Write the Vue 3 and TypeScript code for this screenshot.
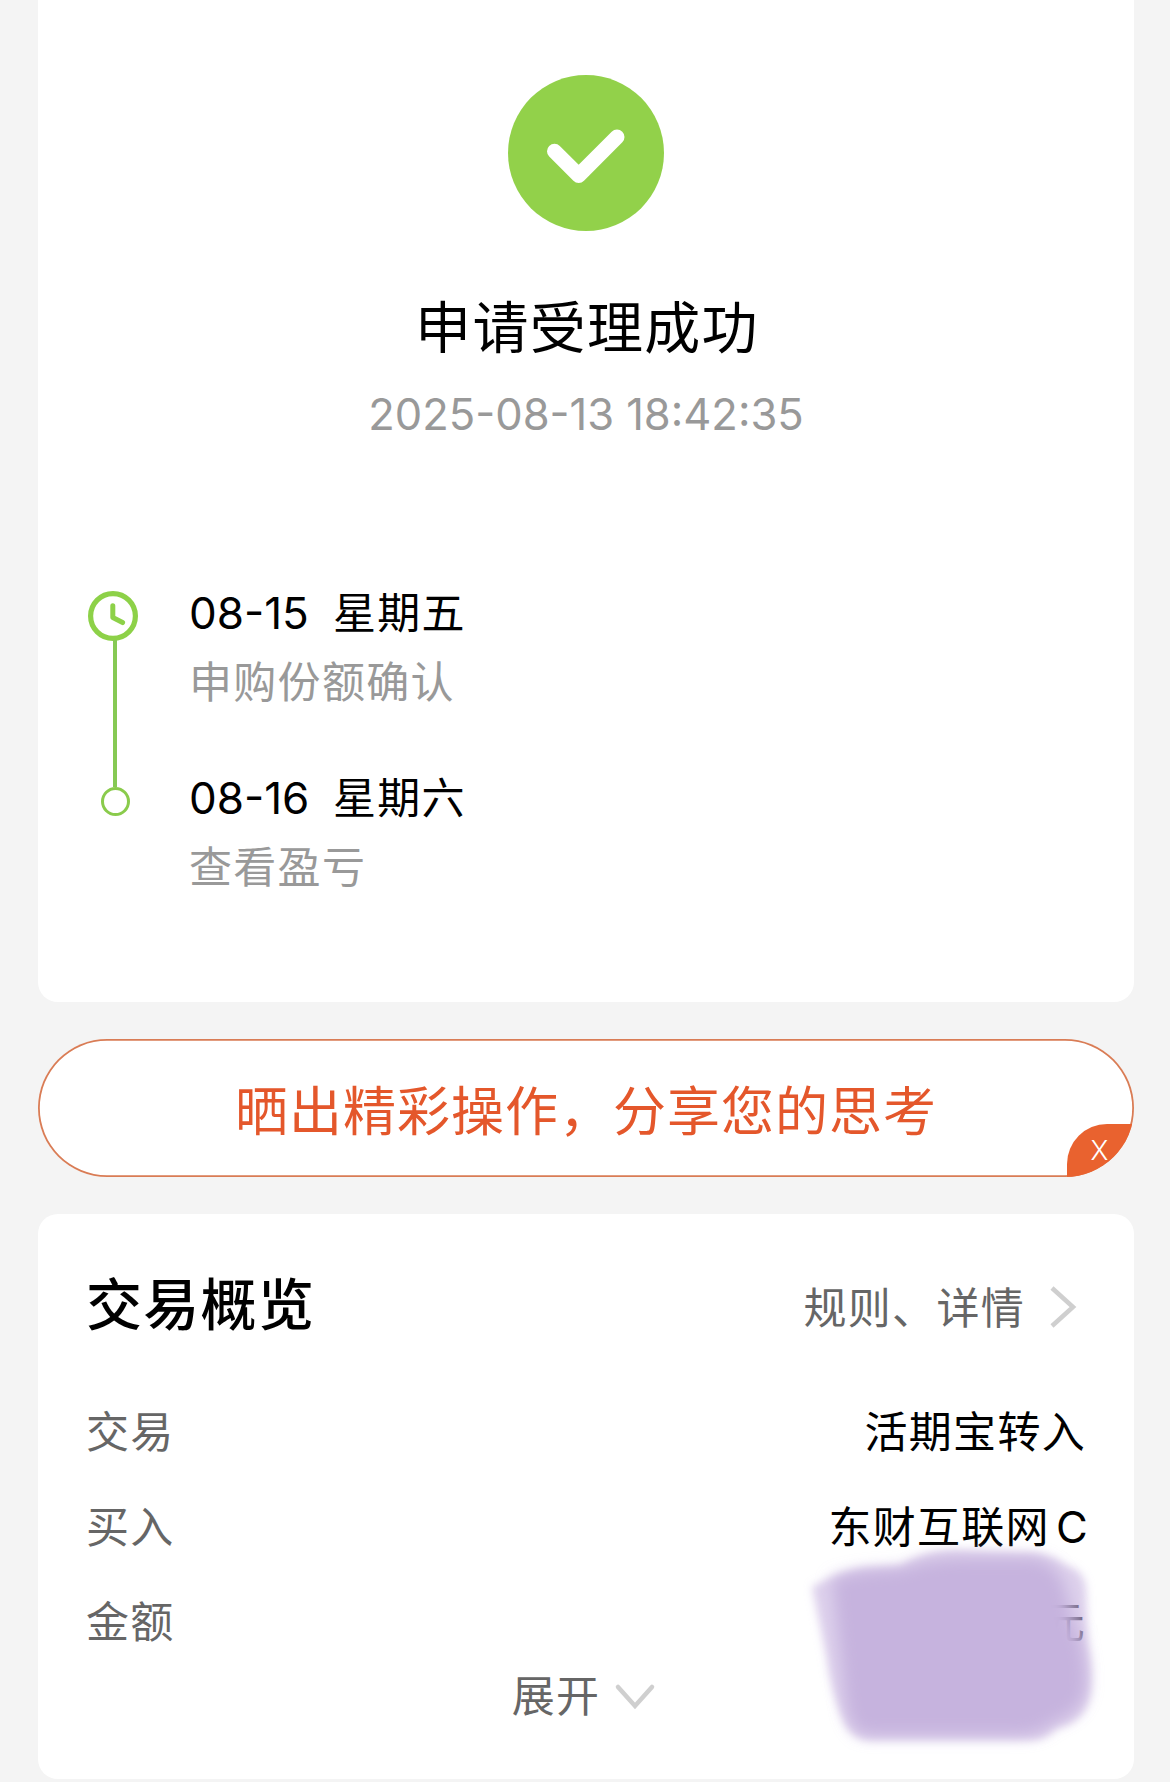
<script setup lang="ts">
interface Step {
  date: string
  weekday: string
  label: string
}
interface Row {
  label: string
  value: string
  suffix?: string
}

const steps: Step[] = [
  { date: '08-15', weekday: '星期五', label: '申购份额确认' },
  { date: '08-16', weekday: '星期六', label: '查看盈亏' },
]

const rows: Row[] = [
  { label: '交易', value: '活期宝转入' },
  { label: '买入', value: '东财互联网', suffix: 'C' },
  { label: '金额', value: '元' },
]
</script>

<template>
  <main class="page">
    <section class="card result">
      <svg class="badge" viewBox="0 0 156 156">
        <circle cx="78" cy="78" r="78" fill="#92d14a" />
        <path d="M46.5 76.2 70.7 100.4 109 62" fill="none" stroke="#fff" stroke-width="15" stroke-linecap="round" stroke-linejoin="round" />
      </svg>
      <h1 class="title">申请受理成功</h1>
      <p class="time"><span>2025-08-13</span><span>18:42:35</span></p>

      <div class="timeline">
        <div class="rail">
          <svg class="clock" viewBox="0 0 50 50">
            <circle cx="25" cy="25" r="22.4" fill="none" stroke="#8dd148" stroke-width="5.2" />
            <path d="M24.8 14.8V26.6L34.6 31.6" fill="none" stroke="#8dd148" stroke-width="5" stroke-linecap="round" stroke-linejoin="round" />
          </svg>
          <span class="line"></span>
          <span class="dot"></span>
        </div>
        <ol class="steps">
          <li v-for="s in steps" :key="s.date" class="step">
            <div class="step-head">
              <span class="step-date">{{ s.date }}</span>
              <span class="cjk">{{ s.weekday }}</span>
            </div>
            <div class="step-label cjk">{{ s.label }}</div>
          </li>
        </ol>
      </div>
    </section>

    <section class="banner">
      <span class="banner-text">晒出精彩操作，分享您的思考</span>
      <button class="close">X</button>
    </section>

    <section class="card overview">
      <header class="head">
        <h2>交易概览</h2>
        <a class="link cjk">规则、详情
          <svg class="chev-right" viewBox="0 0 28 46"><path d="M3 4 24 23 3 42" fill="none" stroke="#cfcfcf" stroke-width="4.5" /></svg>
        </a>
      </header>
      <div class="rows">
        <div v-for="r in rows" :key="r.label" class="row cjk">
          <span class="row-label">{{ r.label }}</span>
          <span class="row-value"><span>{{ r.value }}</span><span v-if="r.suffix" class="suffix">{{ r.suffix }}</span></span>
        </div>
      </div>
      <div class="expand cjk">
        <span>展开</span>
        <svg class="chev-down" viewBox="0 0 42 28"><path d="M4 5 21 24 38 5" fill="none" stroke="#cfcfcf" stroke-width="4.5" stroke-linecap="round" /></svg>
      </div>
      <svg class="smudge" viewBox="790 1530 320 230">
        <defs>
          <filter id="soft" x="-10%" y="-10%" width="120%" height="120%"><feGaussianBlur stdDeviation="4" /></filter>
          <filter id="softer" x="-15%" y="-15%" width="130%" height="130%"><feGaussianBlur stdDeviation="8" /></filter>
        </defs>
        <path filter="url(#soft)" fill="#c6b3df" fill-opacity=".6" d="M812 1587 Q830 1575 862 1568 L900 1566 Q925 1550 955 1550 L1035 1553 Q1055 1556 1066 1565 Q1084 1570 1086 1588 L1088 1645 Q1094 1680 1088 1703 Q1080 1724 1056 1728 Q1046 1740 1032 1740 L868 1740 Q850 1738 843 1720 Q830 1690 826 1655 Z" />
        <path filter="url(#softer)" fill="#c6b3de" d="M832 1580 Q850 1570 900 1569 Q930 1558 960 1558 L1036 1558 Q1060 1566 1066 1590 L1073 1620 Q1088 1650 1086 1690 Q1080 1714 1054 1722 Q1040 1735 1020 1735 L866 1735 Q848 1730 845 1700 Z" />
      </svg>
    </section>
  </main>
</template>

<style>
body {
  background: #f4f4f4;
}
</style>

<style scoped>
.page {
  box-sizing: border-box;
  width: 1170px;
  height: 1782px;
  padding: 0 36px 0 38px;
  overflow: hidden;
  background: #f4f4f4;
  color: #000;
  font-family: Inter, "Noto Sans CJK SC", sans-serif;
  font-size: 43px;
}
h1, h2, p, ol {
  margin: 0;
  padding: 0;
  font-weight: 400;
  list-style: none;
}
.card {
  box-sizing: border-box;
  background: #fff;
}
.cjk {
  letter-spacing: 1.3px;
}
.result {
  display: flex;
  flex-direction: column;
  align-items: center;
  height: 1002px;
  padding-top: 75px;
  border-radius: 0 0 20px 20px;
}
.badge {
  display: block;
  width: 156px;
  height: 156px;
}
.title {
  margin-top: 57px;
  padding-left: 2px;
  font-size: 56px;
  line-height: 80px;
  letter-spacing: 1.3px;
}
.time {
  display: flex;
  gap: 12px;
  margin-top: 16px;
  color: #999;
  font-size: 43.5px;
  line-height: 60px;
}
.timeline {
  display: flex;
  align-self: stretch;
  margin-top: 134px;
  padding-left: 50px;
}
.rail {
  display: flex;
  flex-direction: column;
  width: 50px;
  padding-top: 13px;
}
.clock {
  display: block;
  width: 50px;
  height: 50px;
}
.line {
  width: 4px;
  height: 147px;
  margin: -1px 0 0 25px;
  background: #86c954;
}
.dot {
  box-sizing: border-box;
  width: 29px;
  height: 29px;
  margin: 0 0 0 13px;
  border: 3px solid #8acb4c;
  border-radius: 50%;
}
.steps {
  margin-left: 51px;
}
.step {
  height: 185px;
}
.step-head {
  display: flex;
  line-height: 71px;
}
.step-date {
  width: 144px;
  font-size: 44px;
}
.step-label {
  color: #999;
  line-height: 66px;
}
.banner {
  position: relative;
  box-sizing: border-box;
  display: flex;
  align-items: center;
  justify-content: center;
  height: 138px;
  margin-top: 37px;
  overflow: hidden;
  border-radius: 69px;
  background: #fff;
  box-shadow: inset 0 0 0 1.8px #d97c55;
}
.banner-text {
  padding-top: 7px;
  color: #e4572b;
  font-size: 53px;
  line-height: 80px;
  letter-spacing: 1px;
}
.close {
  position: absolute;
  right: 0;
  bottom: 0;
  box-sizing: border-box;
  width: 67px;
  height: 53px;
  padding: 0 2px 0 0;
  border: 0;
  border-radius: 40px 0 0 0;
  background: #e9622f;
  color: #fff;
  font: 300 27px/53px Inter, sans-serif;
  text-align: center;
}
.overview {
  position: relative;
  height: 565px;
  margin-top: 37px;
  padding: 51px 48px 0 48px;
  border-radius: 20px;
}
.head {
  display: flex;
  align-items: center;
  justify-content: space-between;
  height: 80px;
}
.head h2 {
  font-size: 56px;
  font-weight: 500;
  line-height: 80px;
  letter-spacing: 1.3px;
}
.link {
  display: flex;
  align-items: center;
  color: #666;
}
.chev-right {
  width: 28px;
  height: 46px;
  margin: 4px 9px 0 24px;
}
.rows {
  margin-top: 40px;
}
.row {
  display: flex;
  justify-content: space-between;
  height: 95px;
  line-height: 95px;
}
.row-label {
  color: #666;
}
.row-value {
  display: flex;
  white-space: nowrap;
}
.suffix {
  margin-left: 6px;
  margin-right: -3px;
  font-size: 43.5px;
}
.expand {
  display: flex;
  align-items: center;
  justify-content: center;
  height: 60px;
  margin-top: -7px;
  padding-right: 4px;
  color: #666;
}
.chev-down {
  width: 42px;
  height: 28px;
  margin: 5px 0 0 14px;
}
.smudge {
  position: absolute;
  top: 316px;
  left: 752px;
  width: 320px;
  height: 230px;
}
</style>
